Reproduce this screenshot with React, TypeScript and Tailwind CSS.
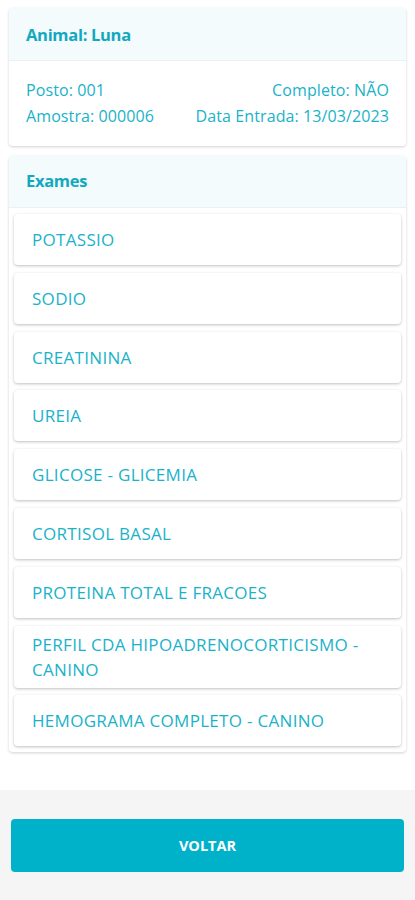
const exames = [
  'POTASSIO',
  'SODIO',
  'CREATININA',
  'UREIA',
  'GLICOSE - GLICEMIA',
  'CORTISOL BASAL',
  'PROTEINA TOTAL E FRACOES',
  'PERFIL CDA HIPOADRENOCORTICISMO - CANINO',
  'HEMOGRAMA COMPLETO - CANINO',
]

export default function App() {
  return (
    <div className="min-h-[900px] bg-white flex flex-col font-['Open_Sans',sans-serif] text-[#1ab2c9]">
      <div className="px-[9px] pt-[8px]">
        {/* animal */}
        <div className="rounded-[4px] bg-white shadow-[0_1px_3px_rgba(0,0,0,0.18)] overflow-hidden">
          <div className="h-[53px] bg-[#f3fbfd] border-b border-[#e8f1f3] flex items-center px-[17px] pt-[3px]">
            <span className="text-[16.5px] font-bold tracking-[-0.3px] text-[#12a9c0]">Animal: Luna</span>
          </div>
          <div className="px-[17px] pt-[16px] pb-[17px] text-[16px] leading-[26px] tracking-[0.1px]">
            <div className="flex justify-between">
              <span>Posto: 001</span>
              <span>Completo: NÃO</span>
            </div>
            <div className="flex justify-between">
              <span>Amostra: 000006</span>
              <span>Data Entrada: 13/03/2023</span>
            </div>
          </div>
        </div>

        {/* exames */}
        <div className="mt-[10px] rounded-[4px] bg-white shadow-[0_1px_3px_rgba(0,0,0,0.18)] overflow-hidden pb-[6px]">
          <div className="h-[52px] bg-[#f3fbfd] border-b border-[#e8f1f3] flex items-center px-[17px]">
            <span className="text-[16.5px] font-bold tracking-[-0.3px] text-[#12a9c0]">Exames</span>
          </div>
          <div className="px-[5px] pt-[6px] flex flex-col gap-[7.8px]">
            {exames.map((e) => (
              <div
                key={e}
                className="min-h-[51px] py-[6px] px-[18px] flex items-center rounded-[4px] bg-white shadow-[0_1px_3px_rgba(0,0,0,0.25)] text-[17px] leading-[25px] tracking-[0.3px]"
              >
                {e}
              </div>
            ))}
          </div>
        </div>
      </div>

      <div className="mt-auto h-[110px] bg-[#f5f5f5] px-[11px] pt-[29px]">
        <button className="w-full h-[53px] rounded-[4px] bg-[#00b2c9] text-white text-[14.5px] font-bold">
          VOLTAR
        </button>
      </div>
    </div>
  )
}
